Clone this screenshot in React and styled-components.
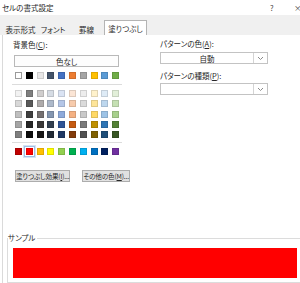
import styled, { createGlobalStyle } from "styled-components";

const GlobalStyle = createGlobalStyle`
  html, body {
    margin: 0;
    padding: 0;
    background: #fff;
  }
  body {
    width: 300px;
    height: 283px;
    overflow: hidden;
    font-family: "Noto Sans CJK JP", "Noto Sans", sans-serif;
    font-size: 7.5px;
    color: #262626;
    font-feature-settings: "palt";
  }
`;

const themeRows = [
  ["#ffffff", "#000000", "#e7e6e6", "#44546a", "#4472c4", "#ed7d31", "#a5a5a5", "#ffc000", "#5b9bd5", "#70ad47"],
];

const tintRows = [
  ["#f2f2f2", "#7f7f7f", "#d0cece", "#d6dce4", "#dae3f3", "#fbe5d5", "#ededed", "#fff2cc", "#deebf6", "#e2efd9"],
  ["#d8d8d8", "#595959", "#aeabab", "#adb9ca", "#b4c6e7", "#f7cbac", "#dbdbdb", "#fee599", "#bdd7ee", "#c5e0b3"],
  ["#bfbfbf", "#3f3f3f", "#757070", "#8496b0", "#8eaadb", "#f4b183", "#c9c9c9", "#ffd965", "#9dc3e6", "#a8d08d"],
  ["#a5a5a5", "#262626", "#3a3838", "#323f4f", "#2f5496", "#c55a11", "#7b7b7b", "#bf9000", "#2e75b5", "#538135"],
  ["#7f7f7f", "#0c0c0c", "#171616", "#222a35", "#1f3864", "#833c0b", "#525252", "#7f6000", "#1e4e79", "#375623"],
];

const standardRow = ["#c00000", "#ff0000", "#ffc000", "#ffff00", "#92d050", "#00b050", "#00b0f0", "#0070c0", "#002060", "#7030a0"];

const tabs = [
  { label: "表示形式", width: 37 },
  { label: "フォント", width: 28 },
  { label: "罫線", width: 39 },
  { label: "塗りつぶし", width: 43, active: true },
];

const Window = styled.div`
  width: 300px;
  height: 283px;
  display: flex;
  flex-direction: column;
`;

const TitleBar = styled.div`
  height: 15px;
  display: flex;
  align-items: center;
  padding-left: 2px;
  font-size: 7.5px;
  & .title {
    flex: 1;
  }
  & .help {
    width: 24px;
    color: #444;
  }
  & .close {
    width: 6px;
    color: #444;
  }
`;

const TabStrip = styled.div`
  height: 20px;
  background: #f0f0f0;
  display: flex;
  align-items: flex-end;
  padding-left: 2px;
`;

const Tab = styled.div`
  width: ${(p) => p.$width}px;
  height: ${(p) => (p.$active ? 15 : 13)}px;
  box-sizing: border-box;
  display: flex;
  align-items: center;
  justify-content: center;
  padding-top: ${(p) => (p.$active ? 0 : 1)}px;
  margin: ${(p) => (p.$active ? "0 -2px" : "0")};
  background: ${(p) => (p.$active ? "#fff" : "transparent")};
  border: 1px solid ${(p) => (p.$active ? "#b4b4b4" : "transparent")};
  border-bottom: none;
  position: relative;
  z-index: ${(p) => (p.$active ? 1 : 0)};
  color: #2a2a2a;
  white-space: nowrap;
`;

const Page = styled.div`
  flex: 1;
  display: flex;
  flex-direction: column;
  margin-left: 2px;
  border-left: 1px solid #dadada;
  background: #fff;
`;

const Columns = styled.div`
  display: flex;
  flex: 1;
`;

const LeftCol = styled.div`
  width: 112px;
  margin-left: 10px;
  display: flex;
  flex-direction: column;
`;

const RightCol = styled.div`
  width: 108px;
  margin-left: 35px;
  display: flex;
  flex-direction: column;
`;

const Label = styled.div`
  line-height: 10px;
  height: 10px;
  margin-top: ${(p) => p.$top || 0}px;
  white-space: nowrap;
`;

const NoColorButton = styled.div`
  margin-top: 5px;
  margin-left: 1px;
  width: 105px;
  height: 12px;
  box-sizing: border-box;
  border: 1px solid #b9b9b9;
  background: #fdfdfd;
  display: flex;
  align-items: center;
  justify-content: center;
`;

const Palette = styled.div`
  display: grid;
  grid-template-columns: repeat(10, 7px);
  column-gap: 3.8px;
  row-gap: 3.3px;
  margin-top: ${(p) => p.$top}px;
  margin-left: 2px;
`;

const Swatch = styled.span`
  width: 7px;
  height: 7px;
  box-sizing: border-box;
  background: ${(p) => p.$color};
  border: 1px solid ${(p) => (p.$color === "#ffffff" ? "#9a9a9a" : "rgba(0,0,0,0.12)")};
  box-shadow: ${(p) =>
    p.$selected ? "0 0 0 1px #fff, 0 0 0 2px #9fc0e6, 0 0 0 3px #d6e4f5" : "none"};
`;

const Separator = styled.div`
  height: 1px;
  width: 110px;
  margin-left: -1px;
  margin-top: ${(p) => p.$top}px;
  background: #dcdcdc;
`;

const ButtonRow = styled.div`
  display: flex;
  gap: 12px;
  margin-top: 15px;
  margin-left: 2px;
`;

const GrayButton = styled.div`
  width: 60px;
  height: 12px;
  box-sizing: border-box;
  border: 1px solid #adadad;
  background: #e1e1e1;
  display: flex;
  align-items: center;
  justify-content: center;
  white-space: nowrap;
  font-size: 6.6px;
  letter-spacing: -0.15px;
`;

const Dropdown = styled.div`
  margin-top: ${(p) => p.$top}px;
  width: 108px;
  height: 12px;
  box-sizing: border-box;
  border: 1px solid #c3c3c3;
  display: flex;
  background: #fff;
  & .value {
    flex: 1;
    display: flex;
    align-items: center;
    justify-content: center;
  }
  & .arrow {
    width: 13px;
    border-left: 1px solid #d4d4d4;
    display: flex;
    align-items: center;
    justify-content: center;
  }
`;

const SampleGroup = styled.fieldset`
  margin: 0 0 0 4px;
  padding: 0 0 4px 0;
  width: 300px;
  box-sizing: border-box;
  border: 1px solid #dcdcdc;
  border-right: none;
  min-width: 0;
  & legend {
    padding: 0 2px 0 0;
    margin-left: 0;
    line-height: 10px;
  }
`;

const SampleFill = styled.div`
  margin: 5px 0 0 5px;
  width: 284px;
  height: 30px;
  background: ${(p) => p.$color};
`;

const Chevron = () => (
  <svg width="7" height="5" viewBox="0 0 7 5">
    <path d="M1 1 L3.5 3.5 L6 1" fill="none" stroke="#8a8a8a" strokeWidth="1" />
  </svg>
);

export default function App() {
  return (
    <Window>
      <GlobalStyle />
      <TitleBar>
        <span className="title">セルの書式設定</span>
        <span className="help">?</span>
        <span className="close">×</span>
      </TitleBar>
      <TabStrip>
        {tabs.map((tab) => (
          <Tab key={tab.label} $width={tab.width} $active={tab.active}>
            {tab.label}
          </Tab>
        ))}
      </TabStrip>
      <Page>
        <Columns>
          <LeftCol>
            <Label $top={5}>
              背景色(<u>C</u>):
            </Label>
            <NoColorButton>色なし</NoColorButton>
            <Palette $top={5}>
              {themeRows.flat().map((c, i) => (
                <Swatch key={"t" + i} $color={c} />
              ))}
            </Palette>
            <Separator $top={5} />
            <Palette $top={5}>
              {tintRows.flat().map((c, i) => (
                <Swatch key={"g" + i} $color={c} />
              ))}
            </Palette>
            <Separator $top={4} />
            <Palette $top={5}>
              {standardRow.map((c, i) => (
                <Swatch key={"s" + i} $color={c} $selected={i === 1} />
              ))}
            </Palette>
            <ButtonRow>
              <GrayButton>
                塗りつぶし効果(<u>I</u>)...
              </GrayButton>
              <GrayButton>
                その他の色(<u>M</u>)...
              </GrayButton>
            </ButtonRow>
          </LeftCol>
          <RightCol>
            <Label $top={4}>
              パターンの色(<u>A</u>):
            </Label>
            <Dropdown $top={3}>
              <span className="value">自動</span>
              <span className="arrow">
                <Chevron />
              </span>
            </Dropdown>
            <Label $top={7}>
              パターンの種類(<u>P</u>):
            </Label>
            <Dropdown $top={2}>
              <span className="value" />
              <span className="arrow">
                <Chevron />
              </span>
            </Dropdown>
          </RightCol>
        </Columns>
        <SampleGroup>
          <legend>サンプル</legend>
          <SampleFill $color="#ff0000" />
        </SampleGroup>
      </Page>
    </Window>
  );
}
